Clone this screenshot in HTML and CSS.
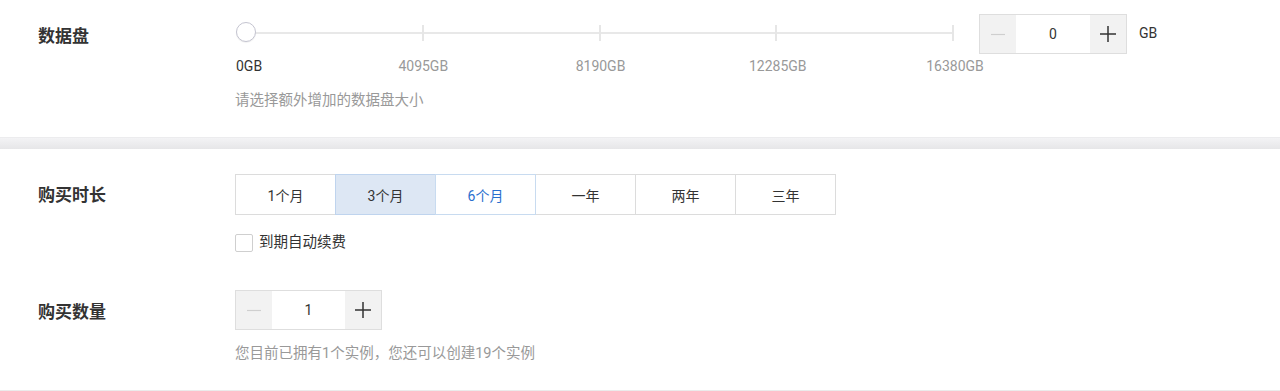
FILE: index.html
```html
<!DOCTYPE html>
<html lang="zh-CN">
<head>
    <meta charset="UTF-8">
    <meta name="viewport" content="width=device-width, initial-scale=1.0">
    <title>购买配置</title>
    <link rel="stylesheet" href="styles.css">
</head>
<body>

    <!-- Data disk -->
    <div class="section section-disk">
        <div class="field">
            <div class="field-label label-disk">数据盘</div>
            <div class="field-body">
                <div class="disk-row">
                    <div class="slider">
                        <div class="slider-rail">
                            <div class="slider-track">
                                <span class="tick"></span>
                                <span class="tick"></span>
                                <span class="tick"></span>
                                <span class="tick"></span>
                                <span class="tick"></span>
                            </div>
                            <span class="slider-handle"></span>
                        </div>
                        <div class="slider-marks">
                            <span class="mark mark-first">0GB</span>
                            <span class="mark">4095GB</span>
                            <span class="mark">8190GB</span>
                            <span class="mark">12285GB</span>
                            <span class="mark">16380GB</span>
                        </div>
                    </div>
                    <div class="stepper stepper-disk">
                        <button class="step step-minus">
                            <svg width="14" height="14" viewBox="0 0 14 14"><path d="M0 7.5H14" stroke="#cfcfcf" stroke-width="1.2"/></svg>
                        </button>
                        <input class="step-input" type="text" value="0">
                        <button class="step step-plus">
                            <svg width="16" height="16" viewBox="0 0 16 16"><path d="M0 8H16M8 0V16" stroke="#333" stroke-width="1.5"/></svg>
                        </button>
                    </div>
                    <span class="unit">GB</span>
                </div>
                <p class="hint hint-disk">请选择额外增加的数据盘大小</p>
            </div>
        </div>
    </div>

    <div class="divider"></div>

    <!-- Duration & quantity -->
    <div class="section section-buy">
        <div class="field">
            <div class="field-label label-tabs">购买时长</div>
            <div class="field-body">
                <div class="tabs">
                    <button class="tab">1个月</button>
                    <button class="tab active">3个月</button>
                    <button class="tab hover">6个月</button>
                    <button class="tab">一年</button>
                    <button class="tab">两年</button>
                    <button class="tab">三年</button>
                </div>
                <label class="check">
                    <span class="check-box"></span>
                    <span>到期自动续费</span>
                </label>
            </div>
        </div>

        <div class="field field-count">
            <div class="field-label label-count">购买数量</div>
            <div class="field-body">
                <div class="stepper stepper-count">
                    <button class="step step-minus">
                        <svg width="14" height="14" viewBox="0 0 14 14"><path d="M0 7.5H14" stroke="#cfcfcf" stroke-width="1.2"/></svg>
                    </button>
                    <input class="step-input" type="text" value="1">
                    <button class="step step-plus">
                        <svg width="16" height="16" viewBox="0 0 16 16"><path d="M0 8H16M8 0V16" stroke="#333" stroke-width="1.5"/></svg>
                    </button>
                </div>
                <p class="hint hint-count">您目前已拥有1个实例，您还可以创建19个实例</p>
            </div>
        </div>
    </div>

</body>
</html>
```

FILE: styles.css
```css
body {
    margin: 0;
    background-color: #fff;
    color: #333;
    font-family: Roboto, "Noto Sans CJK SC", sans-serif;
    font-size: 14.5px;
}
button, input {
    font-family: inherit;
    font-size: 14px;
    color: #333;
}
.section-disk {
    padding: 14px 0 27px;
}
.section-buy {
    padding: 25px 0 27px;
    border-bottom: 2px solid #ebebeb;
}
.divider {
    height: 11px;
    background: linear-gradient(#f3f3f5, #e6e6e8);
    border-top: 1px solid #ececee;
}
.field {
    display: flex;
    align-items: flex-start;
}
.field-label {
    width: 197px;
    padding-left: 38px;
    font-size: 17px;
    font-weight: bold;
    color: #333;
}
.label-disk {
    line-height: 44px;
}
.label-tabs {
    line-height: 42px;
}
.label-count {
    line-height: 44px;
}
.field-body {
    display: flex;
    flex-direction: column;
}

/* slider */
.disk-row {
    display: flex;
    align-items: flex-start;
}
.slider {
    width: 730px;
    padding-left: 1px;
}
.slider-rail {
    position: relative;
    height: 38px;
    display: flex;
    align-items: center;
}
.slider-track {
    margin-left: 9px;
    width: 709px;
    height: 2px;
    background-color: #e8e8e8;
    display: flex;
    justify-content: space-between;
    align-items: center;
}
.tick {
    width: 2px;
    height: 16px;
    background-color: #e6e6e6;
}
.slider-handle {
    position: absolute;
    left: 0;
    top: 8px;
    width: 20px;
    height: 20px;
    border: 1px solid #c4c4d0;
    border-radius: 50%;
    background-color: #fff;
    box-sizing: border-box;
    box-shadow: 0 1px 1px rgba(0, 0, 0, 0.06);
}
.slider-marks {
    margin: 5px 0 0 10px;
    width: 709px;
    display: flex;
    justify-content: space-between;
    line-height: 18px;
    font-size: 14px;
}
.mark {
    width: 0;
    min-width: 0;
    display: flex;
    justify-content: center;
    white-space: nowrap;
    color: #999;
}
.mark-first {
    justify-content: flex-start;
    transform: translateX(-10px);
    color: #333;
}

/* stepper */
.stepper {
    display: flex;
    height: 40px;
    border: 1px solid #dedede;
    box-sizing: border-box;
}
.stepper-disk {
    margin-left: 13px;
    width: 148px;
}
.stepper-count {
    width: 147px;
}
.step {
    width: 36px;
    border: none;
    padding: 0;
    background-color: #f2f2f2;
    display: flex;
    align-items: center;
    justify-content: center;
}
.step-input {
    flex: 1;
    min-width: 0;
    border: none;
    padding: 0;
    text-align: center;
    background-color: #fff;
    outline: none;
}
.unit {
    margin-left: 12px;
    line-height: 38px;
    font-size: 14px;
    color: #333;
}

/* hints */
.hint {
    margin: 0;
    line-height: 18px;
    color: #999;
}
.hint-disk {
    margin-top: 17px;
}
.hint-count {
    margin-top: 15px;
}

/* tabs */
.tabs {
    display: flex;
}
.tab {
    width: 101px;
    height: 41px;
    padding: 0;
    border: 1px solid #dcdcdc;
    background-color: #fff;
    cursor: pointer;
}
.tab + .tab {
    margin-left: -1px;
}
.tab.active {
    position: relative;
    background-color: #dde7f4;
    border-color: #bfd4ee;
}
.tab.hover {
    position: relative;
    color: #2a6fce;
    border-color: #c8dbf0;
}
.check {
    margin-top: 18px;
    display: flex;
    align-items: center;
    gap: 6px;
    line-height: 19px;
}
.check-box {
    width: 18px;
    height: 18px;
    border: 1px solid #cfcfcf;
    border-radius: 2px;
    box-sizing: border-box;
}
.field-count {
    margin-top: 38px;
}
```
